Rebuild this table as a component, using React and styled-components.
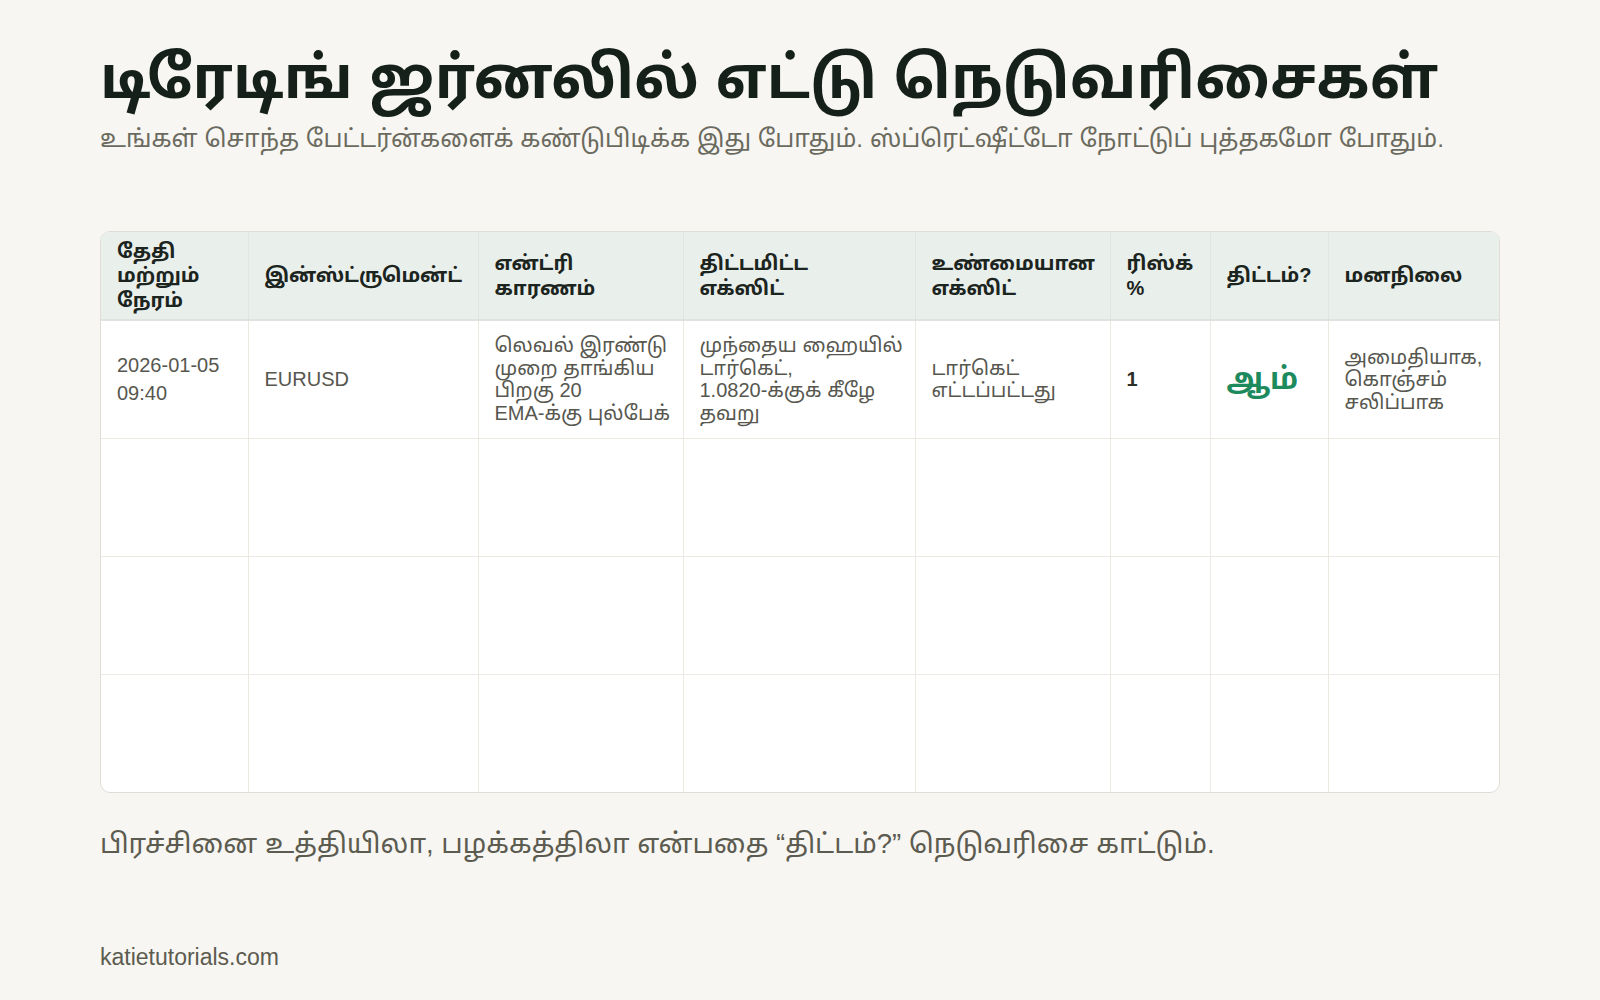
import React from 'react';
import styled, { createGlobalStyle } from 'styled-components';

const GlobalStyle = createGlobalStyle`
  html, body {
    margin: 0;
    padding: 0;
    background: #f7f6f2;
  }
  body {
    font-family: "Liberation Sans", "Noto Sans Tamil", Arial, sans-serif;
  }
`;

const Page = styled.div`
  width: 1600px;
  height: 1000px;
  box-sizing: border-box;
  padding: 38px 100px 0;
  display: flex;
  flex-direction: column;
`;

const Title = styled.h1`
  margin: 0;
  font-size: 58.4px;
  line-height: 80px;
  font-weight: 700;
  color: #16201b;
  white-space: nowrap;
`;

const Subtitle = styled.p`
  margin: 5px 0 0;
  font-size: 24.4px;
  line-height: 32px;
  color: #6b6a5e;
`;

const TableWrap = styled.div`
  margin-top: 76px;
  border: 1px solid #dfddd5;
  border-radius: 10px;
  overflow: hidden;
  background: #fff;
`;

const Table = styled.table`
  width: 100%;
  border-collapse: collapse;
  table-layout: fixed;
`;

const Col = styled.col`
  width: ${(p) => p.$w}px;
`;

const Th = styled.th`
  background: #e9efeb;
  color: #1c2420;
  font-size: 20px;
  font-weight: 700;
  line-height: 24.5px;
  text-align: left;
  padding: 6px 15px 6px 16px;
  height: 88px;
  box-sizing: border-box;
  border-right: 1px solid #e1e5e0;
  border-bottom: 2px solid #dfe3de;
  &:last-child {
    border-right: none;
  }
`;

const Td = styled.td`
  height: 118px;
  box-sizing: border-box;
  padding: 10px 15px 10px 16px;
  font-size: ${(p) => (p.$big ? '30px' : '20px')};
  line-height: ${(p) => (p.$tight ? '22.5px' : '28px')};
  font-weight: ${(p) => (p.$bold ? 700 : 400)};
  color: ${(p) => (p.$green ? '#1d8a5e' : p.$bold ? '#2f2f2a' : '#57574f')};
  vertical-align: middle;
  border-right: 1px solid #ebe9e2;
  border-bottom: 1px solid #ebe9e2;
  &:last-child {
    border-right: none;
  }
  tr:last-child > & {
    border-bottom: none;
  }
`;

const Line = styled.span`
  display: block;
  white-space: nowrap;
`;

const Note = styled.p`
  margin: 34px 0 0;
  font-size: 27.5px;
  line-height: 34px;
  color: #5c5b50;
`;

const Footer = styled.div`
  margin-top: 82px;
  font-size: 23px;
  line-height: 28px;
  color: #5c5b50;
`;

const widths = [147, 230, 205, 232, 195, 100, 118, 173];

const headers = [
  ['தேதி', 'மற்றும்', 'நேரம்'],
  ['இன்ஸ்ட்ருமென்ட்'],
  ['என்ட்ரி', 'காரணம்'],
  ['திட்டமிட்ட', 'எக்ஸிட்'],
  ['உண்மையான', 'எக்ஸிட்'],
  ['ரிஸ்க்', '%'],
  ['திட்டம்?'],
  ['மனநிலை'],
];

const Lines = ({ items }) => items.map((t) => <Line key={t}>{t}</Line>);

export default function App() {
  return (
    <Page>
      <GlobalStyle />
      <Title>டிரேடிங் ஜர்னலில் எட்டு நெடுவரிசைகள்</Title>
      <Subtitle>
        உங்கள் சொந்த பேட்டர்ன்களைக் கண்டுபிடிக்க இது போதும். ஸ்ப்ரெட்ஷீட்டோ நோட்டுப் புத்தகமோ போதும்.
      </Subtitle>
      <TableWrap>
        <Table>
          <colgroup>
            {widths.map((w, i) => (
              <Col key={i} $w={w} />
            ))}
          </colgroup>
          <thead>
            <tr>
              {headers.map((h) => (
                <Th key={h[0]}>
                  <Lines items={h} />
                </Th>
              ))}
            </tr>
          </thead>
          <tbody>
            <tr>
              <Td>
                <Lines items={['2026-01-05', '09:40']} />
              </Td>
              <Td>EURUSD</Td>
              <Td $tight>
                <Lines items={['லெவல் இரண்டு', 'முறை தாங்கிய', 'பிறகு 20', 'EMA-க்கு புல்பேக்']} />
              </Td>
              <Td $tight>
                <Lines items={['முந்தைய ஹையில்', 'டார்கெட்,', '1.0820-க்குக் கீழே', 'தவறு']} />
              </Td>
              <Td $tight>
                <Lines items={['டார்கெட்', 'எட்டப்பட்டது']} />
              </Td>
              <Td $bold>1</Td>
              <Td $big $bold $green>ஆம்</Td>
              <Td $tight>
                <Lines items={['அமைதியாக,', 'கொஞ்சம்', 'சலிப்பாக']} />
              </Td>
            </tr>
            {[0, 1, 2].map((r) => (
              <tr key={r}>
                {widths.map((w, i) => (
                  <Td key={i} />
                ))}
              </tr>
            ))}
          </tbody>
        </Table>
      </TableWrap>
      <Note>பிரச்சினை உத்தியிலா, பழக்கத்திலா என்பதை “திட்டம்?” நெடுவரிசை காட்டும்.</Note>
      <Footer>katietutorials.com</Footer>
    </Page>
  );
}
